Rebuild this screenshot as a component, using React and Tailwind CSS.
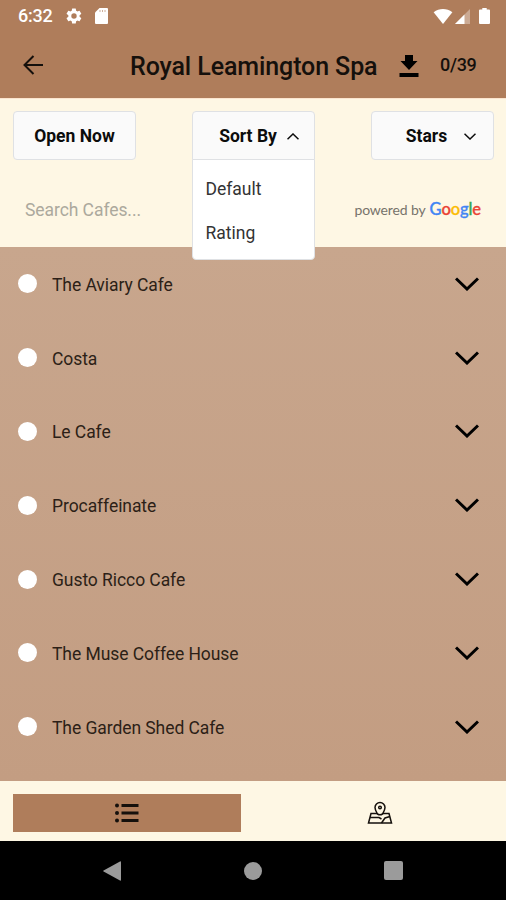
import { clsx } from 'clsx';

const CAFES = [
  'The Aviary Cafe',
  'Costa',
  'Le Cafe',
  'Procaffeinate',
  'Gusto Ricco Cafe',
  'The Muse Coffee House',
  'The Garden Shed Cafe',
];

const SORT_OPTIONS = ['Default', 'Rating'];

function Chevron({ up = false, className, strokeWidth }) {
  return (
    <svg viewBox="0 0 24 14" fill="none" stroke="currentColor" strokeWidth={strokeWidth} className={className}>
      <path d={up ? 'M1 12.500 12 2l11 10.500' : 'M1 1.500 12 12 23 1.500'} />
    </svg>
  );
}

function StatusBar() {
  return (
    <div className="flex h-8 items-center pl-[18px] pr-[16px] text-white">
      <span className="w-[47px] text-[18px] leading-none font-medium tracking-[-0.2px]">6:32</span>
      <svg viewBox="0 0 24 24" fill="currentColor" className="h-[18px] w-[18px]">
        <path d="M19.4 13a7.500 7.500 0 0 0 0-2l2.100-1.600a.5.5 0 0 0 .1-.7l-2-3.400a.5.5 0 0 0-.6-.2l-2.500 1a7.300 7.300 0 0 0-1.700-1l-.4-2.700a.5.5 0 0 0-.5-.4h-4a.5.5 0 0 0-.5.4L9 5.100a7.700 7.700 0 0 0-1.700 1l-2.500-1a.5.5 0 0 0-.6.2l-2 3.400a.5.5 0 0 0 .1.700L4.500 11a7.900 7.900 0 0 0 0 2l-2.200 1.600a.5.5 0 0 0-.1.700l2 3.400c.1.200.4.300.6.200l2.500-1a7.300 7.300 0 0 0 1.700 1l.4 2.700c0 .2.200.4.500.4h4c.3 0 .5-.2.500-.4l.4-2.700a7.700 7.700 0 0 0 1.700-1l2.500 1c.2.100.5 0 .6-.2l2-3.400a.5.5 0 0 0-.1-.7zM12 15.600a3.600 3.600 0 1 1 0-7.200 3.600 3.600 0 0 1 0 7.200" />
      </svg>
      <svg viewBox="0 0 13 16" className="ml-[12px] h-4 w-[13px]">
        <path d="M4.500 0H12a1 1 0 0 1 1 1v14a1 1 0 0 1-1 1H1a1 1 0 0 1-1-1V4.500z" fill="currentColor" />
        <path d="M5 2v2M7.500 2v2M10 2v2" stroke="#af7d5b" strokeWidth="1" opacity=".6" />
      </svg>
      <svg viewBox="0 0 20 16" fill="currentColor" className="ml-auto h-[15px] w-5">
        <path d="M10 16 0 3.500C3 1 6.500 0 10 0s7 1 10 3.500z" />
      </svg>
      <svg viewBox="0 0 15 15" fill="currentColor" className="ml-[2px] h-[15px] w-[15px]">
        <path d="M15 0v15H0z" opacity=".35" />
        <path d="M9.500 5.500V15H0z" />
      </svg>
      <svg viewBox="0 0 11 16" fill="currentColor" className="ml-[9px] h-4 w-[11px]">
        <path d="M3.300 0h4.400v1.600H10a1 1 0 0 1 1 1V15a1 1 0 0 1-1 1H1a1 1 0 0 1-1-1V2.600a1 1 0 0 1 1-1h2.300z" />
      </svg>
    </div>
  );
}

function Header() {
  return (
    <div className="flex h-[66px] items-center pl-[23px] text-[#15100c]">
      <svg viewBox="0 0 20 20" fill="none" stroke="currentColor" strokeWidth="2" className="h-5 w-5">
        <path d="M20 10H1.500M10.500 1l-9 9 9 9" />
      </svg>
      <h1 className="ml-[87px] w-[269px] pt-[2px] text-[25px] leading-none font-medium tracking-[-0.1px] whitespace-nowrap">
        Royal Leamington Spa
      </h1>
      <svg viewBox="0 0 20 22" fill="currentColor" className="mt-px h-[22px] w-5 text-black">
        <path d="M6 0h8v6h4.500L10 15 1.500 6H6zM.5 18h19v4H.5z" />
      </svg>
      <span className="ml-[21px] text-[18px] leading-none font-medium tracking-[-0.3px]">0/39</span>
    </div>
  );
}

function FilterButton({ children, open = false, hasMenu = false }) {
  return (
    <button
      className={clsx(
        'flex h-[49px] w-[123px] items-center justify-center border border-[#dfe1e4] bg-[#fafafa] pt-[2px] text-[17.500px] font-bold text-[#0c0c0c]',
        open ? 'rounded-t' : 'rounded',
      )}
    >
      <span className={hasMenu ? 'ml-[11px]' : ''}>{children}</span>
      {hasMenu && (
        <Chevron up={open} strokeWidth="3" className={clsx('h-[7px] w-3', open ? 'ml-[10px]' : 'ml-[17px] -mr-[6px]')} />
      )}
    </button>
  );
}

function SortMenu() {
  return (
    <div className="relative">
      <FilterButton open hasMenu>Sort By</FilterButton>
      <ul className="absolute top-[48px] left-0 z-10 w-[123px] rounded-b border border-[#dfe1e4] bg-white pt-[7px] pb-[5px] text-[17.500px] text-[#333]">
        {SORT_OPTIONS.map((option) => (
          <li key={option} className="flex h-[43.500px] items-center pt-px pl-[12.500px]">{option}</li>
        ))}
      </ul>
    </div>
  );
}

function PoweredByGoogle() {
  return (
    <div className="flex items-baseline pb-[2px] text-[14px] text-[#77736b]">
      <span className="font-[Lato] tracking-[-0.15px]">powered by</span>
      <span className="ml-[4px] flex font-[Lato] text-[16.500px] font-medium tracking-[-0.1px] [-webkit-text-stroke:0.35px]">
        <span className="text-[#4285f4]">G</span>
        <span className="text-[#ea4335]">o</span>
        <span className="text-[#fbbc05]">o</span>
        <span className="text-[#4285f4]">g</span>
        <span className="text-[#34a853]">l</span>
        <span className="text-[#ea4335]">e</span>
      </span>
    </div>
  );
}

function CafeRow({ name }) {
  return (
    <li className="flex h-[73.800px] items-center pr-[27px] pl-[18px]">
      <span className="h-[19px] w-[19px] rounded-full bg-white" />
      <span className="ml-[15px] pt-[2px] text-[17.500px] tracking-[-0.07px] text-[#2c1f17]">{name}</span>
      <Chevron strokeWidth="3" className="ml-auto h-[14px] w-6 text-black" />
    </li>
  );
}

function BottomTabs() {
  return (
    <div className="flex h-[60px] items-start bg-[#fef7e4] pt-[13px] pl-[13px] text-[#15100c]">
      <button className="flex h-[38px] w-[228px] items-center justify-center bg-[#af7d5b]">
        <svg viewBox="0 0 24 20" fill="currentColor" className="h-5 w-6">
          <circle cx="2" cy="2.500" r="2" />
          <circle cx="2" cy="10" r="2" />
          <circle cx="2" cy="17.500" r="2" />
          <path d="M6.500 1h17v3h-17zM6.500 8.500h17v3h-17zM6.500 16h17v3h-17z" />
        </svg>
      </button>
      <button className="ml-[25px] flex h-[38px] w-[228px] items-center justify-center pb-[2px]">
        <svg viewBox="0 0 26 23" fill="none" stroke="currentColor" strokeWidth="1.500" className="h-[23px] w-[26px]">
          <path d="M10 12.500H4L1.500 22h23L22 12.500h-6" />
          <path d="M10.500 13C9 10.500 8 9 8 6.500a5 5 0 0 1 10 0c0 2.500-1 4-2.500 6.500q-2.500 1.500-5 0z" />
          <circle cx="13" cy="6.500" r="1.300" />
          <path d="M3 16.500h9l2.500 1.500M23 15.500l-5 1.500-3.500 5" />
        </svg>
      </button>
    </div>
  );
}

function AndroidNav() {
  return (
    <div className="flex h-[59px] items-center bg-black pl-[103px] text-[#9b9b9b]">
      <svg viewBox="0 0 18 20" fill="currentColor" className="h-5 w-[18px]">
        <path d="M17 0.500q1-.5 1 .7v17.600q0 1.200-1 .7L.6 10.600q-1-.6 0-1.200z" />
      </svg>
      <span className="ml-[123px] h-[18px] w-[18px] rounded-full bg-current" />
      <span className="ml-[122px] h-[19px] w-[19px] rounded-[2px] bg-current" />
    </div>
  );
}

export default function App() {
  return (
    <div className="flex h-[900px] w-[506px] flex-col overflow-hidden bg-black font-[Roboto,sans-serif]">
      <div className="h-[98px] bg-[#af7d5b]">
        <StatusBar />
        <Header />
      </div>

      {/* Filters and search */}
      <div className="h-[149px] border-t border-[#fbe5cf] bg-[#fef7e4] pr-[12px] pl-[13px] pt-[12px]">
        <div className="flex justify-between">
          <FilterButton>Open Now</FilterButton>
          <SortMenu />
          <FilterButton hasMenu>Stars</FilterButton>
        </div>
        <div className="mt-[37px] flex items-center justify-between pr-[13px] pl-[12px]">
          <input
            placeholder="Search Cafes..."
            className="w-[150px] text-[17.500px] tracking-[-0.07px] placeholder:text-[#aca99d] outline-none"
          />
          <PoweredByGoogle />
        </div>
      </div>

      <ul className="h-[534px] bg-linear-to-b from-[#c8a68d] to-[#c39d82]">
        {CAFES.map((name) => (
          <CafeRow key={name} name={name} />
        ))}
      </ul>

      <BottomTabs />
      <AndroidNav />
    </div>
  );
}
